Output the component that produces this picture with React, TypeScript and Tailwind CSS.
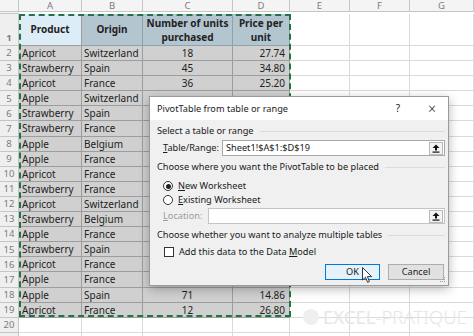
import React from "react";

// ─── Data ────────────────────────────────────────────────────────

const cols = ["A", "B", "C", "D", "E", "F", "G"];

type Row = [string, string, string, string];

const rows: Row[] = [
  ["Apricot", "Switzerland", "18", "27.74"],
  ["Strawberry", "Spain", "45", "34.80"],
  ["Apricot", "France", "36", "25.20"],
  ["Apple", "Switzerland", "", ""],
  ["Strawberry", "Spain", "", ""],
  ["Strawberry", "France", "", ""],
  ["Apple", "Belgium", "", ""],
  ["Apple", "France", "", ""],
  ["Apricot", "France", "", ""],
  ["Strawberry", "France", "", ""],
  ["Apricot", "Switzerland", "", ""],
  ["Strawberry", "Belgium", "", ""],
  ["Apple", "France", "", ""],
  ["Strawberry", "Spain", "", ""],
  ["Apricot", "France", "", ""],
  ["Apple", "France", "", ""],
  ["Apple", "Spain", "71", "14.86"],
  ["Apricot", "France", "12", "26.80"],
];

const gridCols = "grid grid-cols-[19px_63px_61px_90px_57px_60px_60px_64px]";
const sel = "whitespace-nowrap border-r border-b border-[#9d9d9d] bg-[#d0d0d0]";
const blank = "border-r border-b border-[#dadada] bg-white";
const rowHead =
  "flex justify-center border-r border-b border-[#c6c6c6] bg-[#efefef] text-[9.5px] leading-none text-[#7c7c7c]";

// ─── Sheet ───────────────────────────────────────────────────────

function Sheet() {
  return (
    <div className="flex flex-col text-[10px] text-[#222]">
      {/* column letters */}
      <div className={`${gridCols} h-[14px]`}>
        <div className="border-r border-b border-[#c6c6c6] bg-[#f4f4f4]" />
        {cols.map((c) => (
          <div
            key={c}
            className="flex items-center justify-center border-r border-b border-[#c6c6c6] bg-[#f4f4f4] text-[9.5px] leading-none text-[#7c7c7c]"
          >
            {c}
          </div>
        ))}
        <div className="border-b border-[#c6c6c6] bg-[#f4f4f4]" />
      </div>

      {/* header row */}
      <div className={`${gridCols} h-[32px] font-bold`}>
        <div className={`${rowHead} items-end pb-[3px]`}>1</div>
        <div className="flex items-center justify-center border-r border-b border-[#9d9d9d] bg-[#dcedf7]">
          Product
        </div>
        <div className="flex items-center justify-center border-r border-b border-[#8fa2ad] bg-[#b3c5cf]">
          Origin
        </div>
        <div className="flex items-center justify-center whitespace-nowrap border-r border-b border-[#8fa2ad] bg-[#b3c5cf] text-center leading-[14px]">
          Number of units
          <br />
          purchased
        </div>
        <div className="flex items-center justify-center whitespace-nowrap border-r border-b border-[#8fa2ad] bg-[#b3c5cf] text-center leading-[14px]">
          Price per
          <br />
          unit
        </div>
        <div className={blank} />
        <div className={blank} />
        <div className={blank} />
      </div>

      {rows.map((r, i) => (
        <div key={i} className={`${gridCols} h-[15.1px] leading-[14px]`}>
          <div className={`${rowHead} items-center`}>{i + 2}</div>
          <div className={`${sel} pl-[3px]`}>{r[0]}</div>
          <div className={`${sel} pl-[2px]`}>{r[1]}</div>
          <div className={`${sel} text-center`}>{r[2]}</div>
          <div className={`${sel} pr-[4px] text-right`}>{r[3]}</div>
          <div className={blank} />
          <div className={blank} />
          <div className={blank} />
        </div>
      ))}

      <div className={`${gridCols} h-[15.1px]`}>
        <div className={`${rowHead} items-center`}>20</div>
        {cols.map((c) => (
          <div key={c} className={blank} />
        ))}
      </div>
      <div className={`${gridCols} h-[15.1px]`}>
        <div className={rowHead} />
        {cols.map((c) => (
          <div key={c} className={blank} />
        ))}
      </div>
    </div>
  );
}

// ─── Dialog bits ─────────────────────────────────────────────────

function GroupTitle({ children }: { children: React.ReactNode }) {
  return (
    <div className="flex h-[14px] items-center gap-[6px]">
      <span className="whitespace-nowrap">{children}</span>
      <div className="h-px flex-1 bg-[#dcdcdc]" />
    </div>
  );
}

function CollapseButton() {
  return (
    <div className="mr-[1px] flex h-[13px] w-[14px] items-center justify-center border border-[#b9b9b9] bg-[#f3f3f3]">
      <svg width="8" height="9" viewBox="0 0 8 9">
        <path d="M4 0.5 L7.5 4 L5 4 L5 6.5 L3 6.5 L3 4 L0.5 4 Z" fill="#111" />
        <rect x="0.5" y="7.5" width="7" height="1.2" fill="#111" />
      </svg>
    </div>
  );
}

function Field({ value, className = "" }: { value?: string; className?: string }) {
  return (
    <div
      className={`flex h-[16px] items-center justify-between border border-[#a9a9a9] bg-white pl-[3px] ${className}`}
    >
      <span>{value}</span>
      <CollapseButton />
    </div>
  );
}

function Dialog() {
  return (
    <div className="absolute left-[149px] top-[96px] flex h-[190px] w-[300px] flex-col border border-[#9a9a9a] bg-[#f0f0f0] font-['Noto_Sans',sans-serif] text-[9.2px] text-[#1a1a1a] shadow-[0_3px_10px_rgba(0,0,0,0.28)]">
      <div className="flex h-[23px] items-center bg-white pl-[7px]">
        <span className="flex-1">PivotTable from table or range</span>
        <span className="w-[16px] text-center text-[10px]">?</span>
        <span className="ml-[19px] mr-[9px] w-[14px] text-center text-[14px] font-light leading-none">
          ×
        </span>
      </div>

      <div className="flex flex-1 flex-col pl-[7px] pr-[3px] pt-[4px]">
        <GroupTitle>Select a table or range</GroupTitle>

        <div className="mt-[2px] flex items-center">
          <span className="w-[65px] pl-[6px]">
            <span className="underline">T</span>able/Range:
          </span>
          <Field value="Sheet1!$A$1:$D$19" className="flex-1" />
        </div>

        <div className="mt-[4px]">
          <GroupTitle>Choose where you want the PivotTable to be placed</GroupTitle>
        </div>

        <div className="mt-[5px] flex h-[14px] items-center pl-[6px]">
          <div className="flex h-[10px] w-[10px] items-center justify-center rounded-full border border-[#333] bg-white">
            <div className="h-[5px] w-[5px] rounded-full bg-[#222]" />
          </div>
          <span className="ml-[5px]">
            <span className="underline">N</span>ew Worksheet
          </span>
        </div>
        <div className="flex h-[14px] items-center pl-[6px]">
          <div className="h-[10px] w-[10px] rounded-full border border-[#333] bg-white" />
          <span className="ml-[5px]">
            <span className="underline">E</span>xisting Worksheet
          </span>
        </div>

        <div className="mt-[1px] flex items-center">
          <span className="w-[51px] pl-[6px] text-[#9b9b9b]">
            <span className="underline">L</span>ocation:
          </span>
          <Field className="flex-1 border-[#c4c4c4]" />
        </div>

        <div className="mt-[4px]">
          <GroupTitle>Choose whether you want to analyze multiple tables</GroupTitle>
        </div>

        <div className="mt-[3px] flex h-[14px] items-center pl-[7px]">
          <div className="h-[10px] w-[10px] border border-[#333] bg-white" />
          <span className="ml-[5px]">
            Add this data to the Data <span className="underline">M</span>odel
          </span>
        </div>

        <div className="mt-[5px] flex justify-end gap-[8px] pr-[1px]">
          <div className="flex h-[16px] w-[55px] items-center justify-center border border-[#0078d7] bg-[#e5f1fb]">
            OK
          </div>
          <div className="flex h-[16px] w-[56px] items-center justify-center border border-[#adadad] bg-[#e1e1e1]">
            Cancel
          </div>
        </div>
      </div>

      {/* resize grip */}
      <svg className="absolute bottom-[2px] right-[2px]" width="6" height="6" viewBox="0 0 6 6">
        <rect x="4" y="0" width="1" height="1" fill="#a0a0a0" />
        <rect x="2" y="2" width="1" height="1" fill="#a0a0a0" />
        <rect x="4" y="2" width="1" height="1" fill="#a0a0a0" />
        <rect x="0" y="4" width="1" height="1" fill="#a0a0a0" />
        <rect x="2" y="4" width="1" height="1" fill="#a0a0a0" />
        <rect x="4" y="4" width="1" height="1" fill="#a0a0a0" />
      </svg>
    </div>
  );
}

// ─── App ─────────────────────────────────────────────────────────

export default function App() {
  return (
    <div className="relative h-[336px] w-[474px] overflow-hidden bg-white font-['Noto_Sans',sans-serif]">
      <Sheet />

      {/* copy range marquee */}
      <div className="absolute left-[19px] top-[14px] h-[303px] w-[272px] border-2 border-dashed border-[#217346]" />

      <Dialog />

      {/* mouse pointer */}
      <svg className="absolute left-[362px] top-[267px]" width="11" height="17" viewBox="0 0 11 17">
        <path
          d="M0.5 0.5 L0.5 13 L3.5 10.2 L5.6 15.3 L7.4 14.5 L5.4 9.6 L9.6 9.6 Z"
          fill="white"
          stroke="#222"
          strokeWidth="0.9"
          strokeLinejoin="round"
        />
      </svg>

      {/* watermark */}
      <div className="absolute left-[303px] top-[308px] flex items-center gap-[4px] whitespace-nowrap text-[18.5px] leading-none text-[#e6e6e6]">
        <div className="h-[16px] w-[16px] rounded-full bg-[#efefef]" />
        <span>
          EXCEL<span className="font-light">-PRATIQUE</span>
        </span>
      </div>
    </div>
  );
}
